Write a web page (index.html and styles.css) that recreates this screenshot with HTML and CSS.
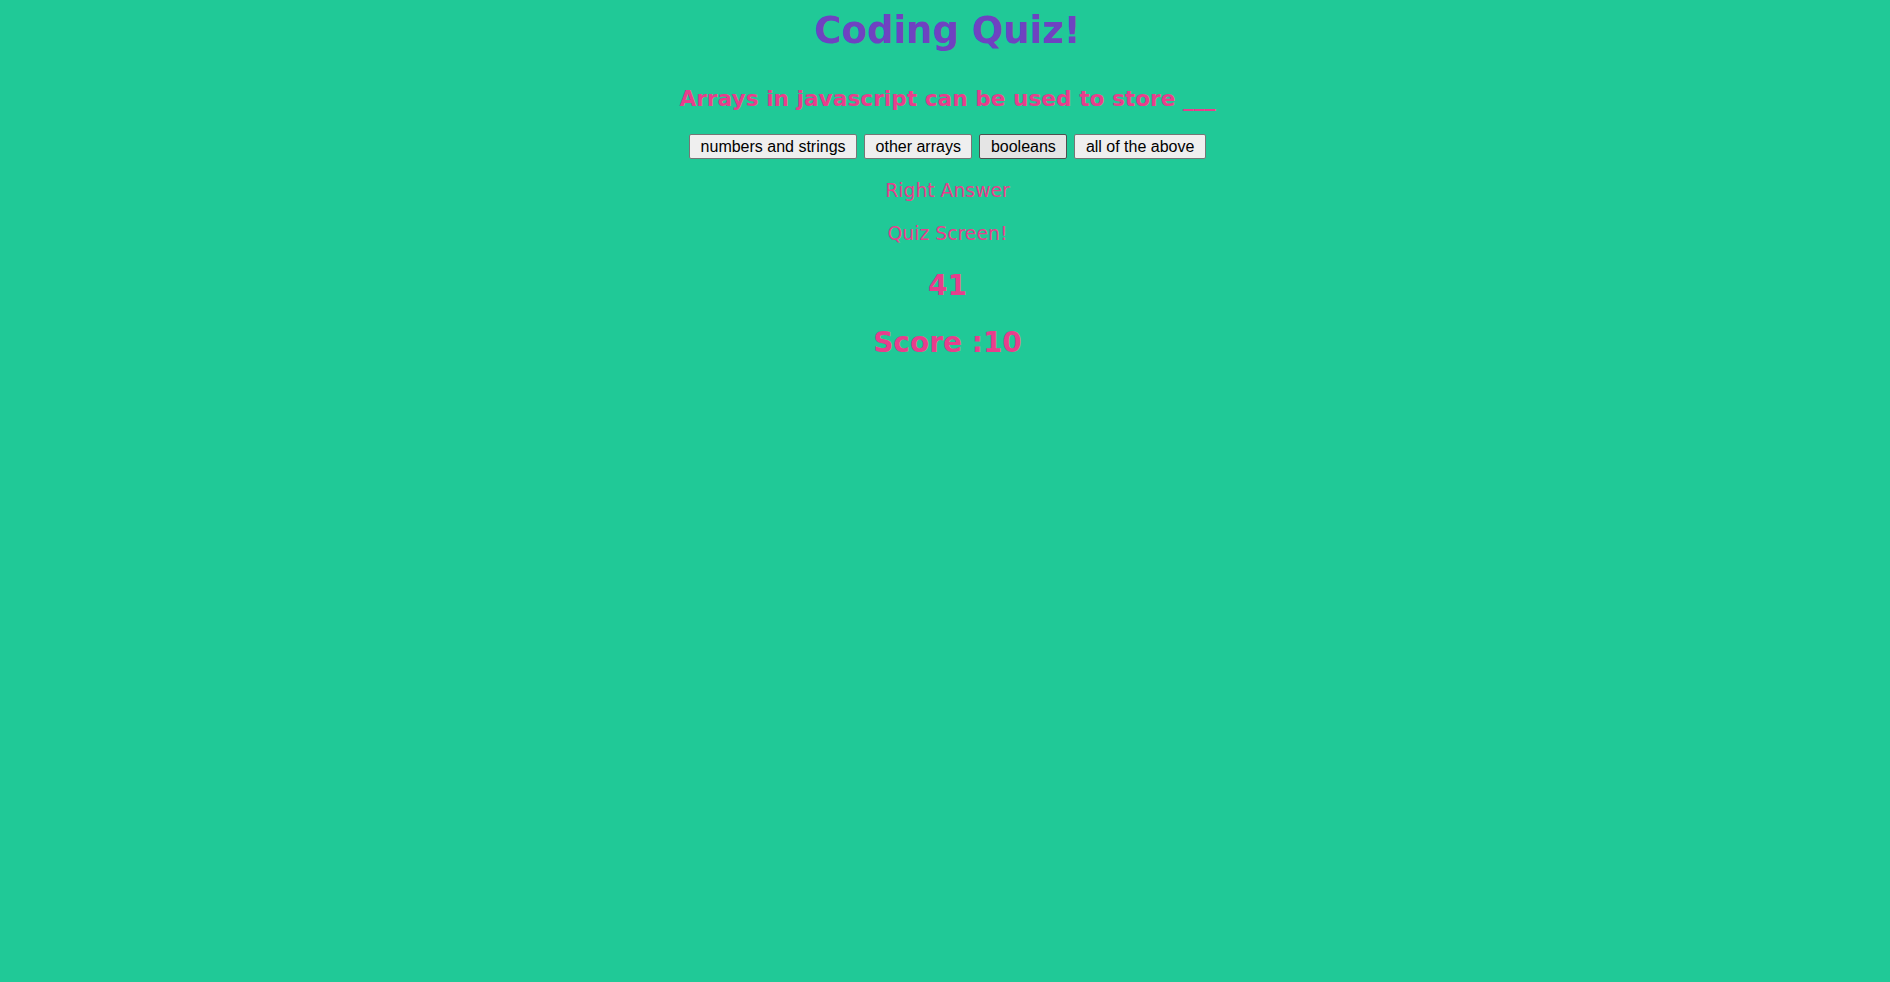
FILE: index.html
```html
<!DOCTYPE html>
<html lang="en">
<head>
<meta charset="utf-8">
<title>Coding Quiz</title>
<link rel="stylesheet" href="styles.css">
</head>
<body>
<main class="quiz">
  <h1 class="title">Coding Quiz!</h1>
  <h4 class="question">Arrays in javascript can be used to store ___</h4>
  <div class="choices">
    <button class="choice">numbers and strings</button>
    <button class="choice">other arrays</button>
    <button class="choice is-hover">booleans</button>
    <button class="choice">all of the above</button>
  </div>
  <p class="feedback">Right Answer</p>
  <p class="feedback">Quiz Screen!</p>
  <h3 class="timer">41</h3>
  <h3 class="score">Score :10</h3>
</main>
</body>
</html>
```

FILE: styles.css
```css
html, body {
  margin: 0;
  padding: 0;
  background: #20c997;
  min-height: 100%;
}
body {
  font-family: "DejaVu Sans", Verdana, sans-serif;
  color: #e83e8c;
}
.quiz {
  display: flex;
  flex-direction: column;
  align-items: center;
  text-align: center;
  padding-top: 7px;
  padding-left: 5px;
}
.title {
  margin: 0;
  font-size: 37px;
  font-weight: bold;
  line-height: 48px;
  color: #6f42c1;
}
.question {
  margin: 29.5px 0 0;
  font-size: 21.7px;
  line-height: 28px;
  font-weight: bold;
}
.choices {
  display: flex;
  gap: 7px;
  margin-top: 21.5px;
}
.choice {
  font-family: "Liberation Sans", Arial, sans-serif;
  font-size: 16px;
  height: 25px;
  padding: 1px 10.5px;
  background: #efefef;
  border: 1px solid #767676;
  border-radius: 2px;
  color: #000;
}
.is-hover {
  background: #e5e5e5;
  border-color: #4f4f4f;
}
.feedback {
  margin: 20px 0 0;
  font-size: 18.8px;
  line-height: 24px;
}
.feedback + .feedback {
  margin-top: 18.5px;
}
.timer {
  margin: 23px 0 0;
  font-size: 28px;
  line-height: 34px;
  font-weight: bold;
}
.score {
  margin: 23.5px 0 0;
  font-size: 28px;
  line-height: 34px;
  font-weight: bold;
}
```
